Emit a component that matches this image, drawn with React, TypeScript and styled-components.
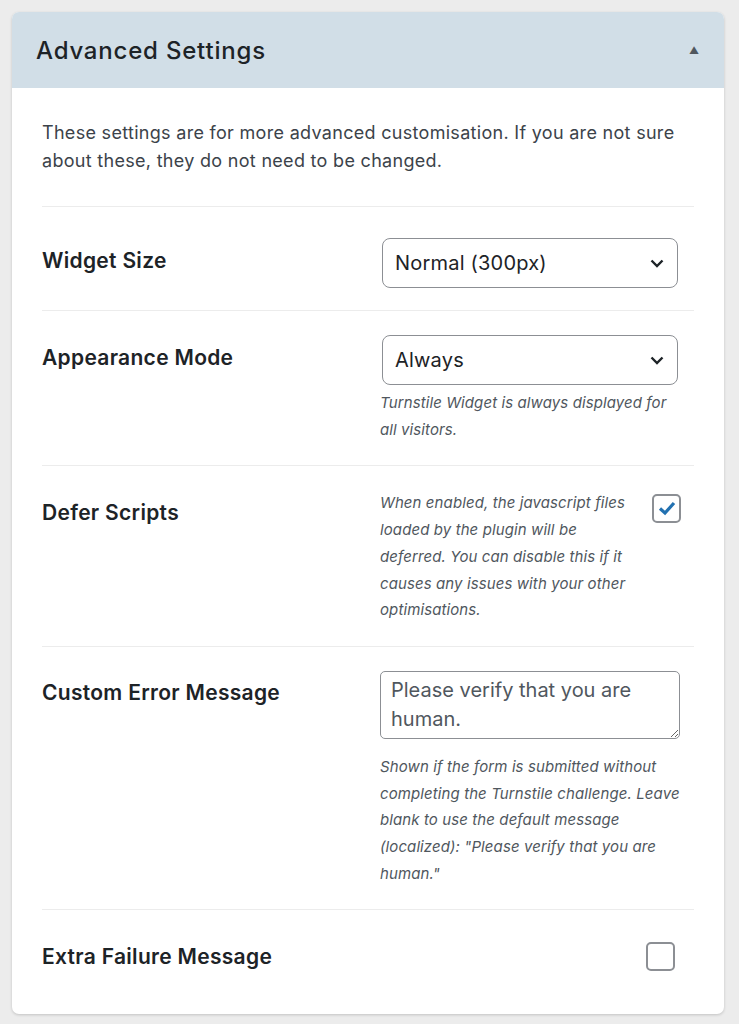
import React from "react";
import styled, { createGlobalStyle } from "styled-components";

const GlobalStyle = createGlobalStyle`
  body {
    margin: 0;
    background: #ececec;
    font-family: Inter, "Liberation Sans", Arial, sans-serif;
    color: #1d2327;
  }
`;

const Page = styled.div`
  padding: 12px 15px 12px 12px;
`;

const Card = styled.section`
  background: #fff;
  border-radius: 7px;
  box-shadow: 0 1px 3px rgba(0, 0, 0, 0.18);
  overflow: hidden;
`;

const Header = styled.header`
  height: 76px;
  background: #d1dee7;
  display: flex;
  align-items: center;
  justify-content: space-between;
  padding: 0 25px 0 24px;
`;

const Title = styled.h2`
  margin: 0;
  font-size: 24px;
  font-weight: 500;
  letter-spacing: 0.8px;
  color: #1d2327;
`;

const Toggle = styled.span`
  font-size: 10px;
  color: #50575e;
`;

const Body = styled.div`
  padding: 31px 30px 14px;
`;

const Intro = styled.p`
  margin: 0 0 31px;
  font-size: 18px;
  line-height: 28px;
  letter-spacing: 0.3px;
  color: #3c434a;
`;

const Row = styled.div<{ $top?: number }>`
  display: grid;
  grid-template-columns: 338px 1fr;
  align-items: start;
  padding: ${(p) => p.$top ?? 24}px 0 22px;
  border-top: 1px solid #ececec;
`;

const Label = styled.div`
  min-height: 44px;
  display: flex;
  align-items: center;
  font-size: 21px;
  font-weight: 600;
  letter-spacing: 0.3px;
  color: #1d2327;
`;

const Control = styled.div`
  display: flex;
  flex-direction: column;
  align-items: flex-start;
`;

const InlineControl = styled.div<{ $end?: boolean }>`
  display: flex;
  align-items: flex-start;
  justify-content: ${(p) => (p.$end ? "flex-end" : "flex-start")};
  gap: 14px;
  padding: ${(p) => (p.$end ? "3.5px 19px 0 0" : "0")};
`;

const SelectWrap = styled.div`
  position: relative;
  width: 296px;
  margin-left: 2px;
`;

const Select = styled.select`
  appearance: none;
  width: 100%;
  height: 50px;
  border: 1px solid #8c8f94;
  border-radius: 8px;
  background: #fff;
  padding: 0 40px 0 12px;
  font-family: inherit;
  font-size: 20px;
  letter-spacing: 0.2px;
  color: #1d2327;
`;

const Chevron = styled.svg`
  position: absolute;
  right: 14px;
  top: 50%;
  margin-top: -4px;
  pointer-events: none;
`;

const Description = styled.p<{ $width?: number; $gap?: number }>`
  margin: ${(p) => p.$gap ?? 0}px 0 0;
  width: ${(p) => p.$width ?? 300}px;
  font-size: 15px;
  font-style: italic;
  line-height: 26.7px;
  letter-spacing: 0.1px;
  color: #50575e;
`;

const TextArea = styled.textarea`
  width: 300px;
  height: 68px;
  box-sizing: border-box;
  border: 1px solid #8c8f94;
  border-radius: 5px;
  padding: 4px 10px;
  font-family: inherit;
  font-size: 20px;
  line-height: 29px;
  color: #50575e;
  resize: vertical;
  margin-bottom: 15px;
`;

const Checkbox = styled.span`
  flex: none;
  width: 29px;
  height: 29px;
  box-sizing: border-box;
  border: 2.5px solid #8c8f94;
  border-radius: 5px;
  display: flex;
  align-items: center;
  justify-content: center;
  margin-top: 4px;
`;

const SelectBox = ({ value }: { value: string }) => (
  <SelectWrap>
    <Select defaultValue={value}>
      <option>{value}</option>
    </Select>
    <Chevron width="14" height="9" viewBox="0 0 14 9">
      <path d="M1.5 1.5 L7 7 L12.5 1.5" fill="none" stroke="#1d2327" strokeWidth="2.4" />
    </Chevron>
  </SelectWrap>
);

export default function App() {
  return (
    <Page>
      <GlobalStyle />
      <Card>
        <Header>
          <Title>Advanced Settings</Title>
          <Toggle>▲</Toggle>
        </Header>
        <Body>
          <Intro>
            These settings are for more advanced customisation. If you are not sure about these,
            they do not need to be changed.
          </Intro>

          <Row $top={31}>
            <Label>Widget Size</Label>
            <Control>
              <SelectBox value="Normal (300px)" />
            </Control>
          </Row>

          <Row>
            <Label>Appearance Mode</Label>
            <Control>
              <SelectBox value="Always" />
              <Description $gap={5}>
                Turnstile Widget is always displayed for all visitors.
              </Description>
            </Control>
          </Row>

          <Row>
            <Label>Defer Scripts</Label>
            <InlineControl>
              <Description $width={258}>
                When enabled, the javascript files loaded by the plugin will be deferred. You can
                disable this if it causes any issues with your other optimisations.
              </Description>
              <Checkbox>
                <svg width="18" height="15" viewBox="0 0 18 15">
                  <path d="M2 7.5 L7 12 L16 2" fill="none" stroke="#2271b1" strokeWidth="3.2" />
                </svg>
              </Checkbox>
            </InlineControl>
          </Row>

          <Row>
            <Label>Custom Error Message</Label>
            <Control>
              <TextArea defaultValue="Please verify that you are human." />
              <Description>
                Shown if the form is submitted without completing the Turnstile challenge. Leave
                blank to use the default message (localized): "Please verify that you are human."
              </Description>
            </Control>
          </Row>

          <Row>
            <Label>Extra Failure Message</Label>
            <InlineControl $end>
              <Checkbox />
            </InlineControl>
          </Row>
        </Body>
      </Card>
    </Page>
  );
}
